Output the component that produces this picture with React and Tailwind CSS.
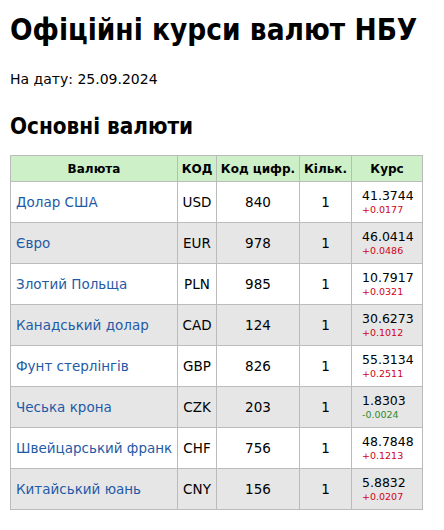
import React from "react";

const rows = [
  ["Долар США", "USD", "840", "41.3744", "+0.0177"],
  ["Євро", "EUR", "978", "46.0414", "+0.0486"],
  ["Злотий Польща", "PLN", "985", "10.7917", "+0.0321"],
  ["Канадський долар", "CAD", "124", "30.6273", "+0.1012"],
  ["Фунт стерлінгів", "GBP", "826", "55.3134", "+0.2511"],
  ["Чеська крона", "CZK", "203", "1.8303", "-0.0024"],
  ["Швейцарський франк", "CHF", "756", "48.7848", "+0.1213"],
  ["Китайський юань", "CNY", "156", "5.8832", "+0.0207"],
];

const cond = { fontFamily: '"DejaVu Sans Condensed", "DejaVu Sans", sans-serif' };

export default function App() {
  return (
    <div className="w-[444px] h-[530px] bg-white px-[10px] text-black" style={{ fontFamily: '"DejaVu Sans", Verdana, sans-serif' }}>
      <h1 className="pt-[12px] text-[29.5px] leading-[36px] font-bold whitespace-nowrap" style={cond}>Офіційні курси валют НБУ</h1>
      <p className="mt-[22px] text-[14px] leading-[18px]">На дату: 25.09.2024</p>
      <h2 className="mt-[23px] text-[22.3px] leading-[30px] font-bold whitespace-nowrap" style={cond}>Основні валюти</h2>
      <table className="mt-[14px] border-collapse text-[13.5px]">
        <thead>
          <tr className="h-[26px] bg-[#cdf0c8] text-[12px] font-bold">
            <th className="w-[167px] border border-[#bbbbbb] p-0 text-center">Валюта</th>
            <th className="w-[39px] border border-[#bbbbbb] p-0 text-center">КОД</th>
            <th className="w-[83px] border border-[#bbbbbb] p-0 text-center">Код цифр.</th>
            <th className="w-[52px] border border-[#bbbbbb] p-0 text-center">Кільк.</th>
            <th className="w-[71px] border border-[#bbbbbb] p-0 text-center">Курс</th>
          </tr>
        </thead>
        <tbody>
          {rows.map((r, i) => (
            <tr key={r[1]} className={"h-[41px] " + (i % 2 === 1 ? "bg-[#e6e6e6]" : "bg-white")}>
              <td className="border border-[#bbbbbb] p-0 pl-[5px] text-[#1f5aa6] whitespace-nowrap">{r[0]}</td>
              <td className="border border-[#bbbbbb] p-0 text-center">{r[1]}</td>
              <td className="border border-[#bbbbbb] p-0 text-center">{r[2]}</td>
              <td className="border border-[#bbbbbb] p-0 text-center">1</td>
              <td className="border border-[#bbbbbb] p-0 pl-[10px]">
                <div className="text-[12.5px] leading-[16px]">{r[3]}</div>
                <div className={"text-[9.5px] leading-[12px] " + (r[4].startsWith("-") ? "text-[#2e8b2e]" : "text-[#d0021b]")}>{r[4]}</div>
              </td>
            </tr>
          ))}
        </tbody>
      </table>
    </div>
  );
}
